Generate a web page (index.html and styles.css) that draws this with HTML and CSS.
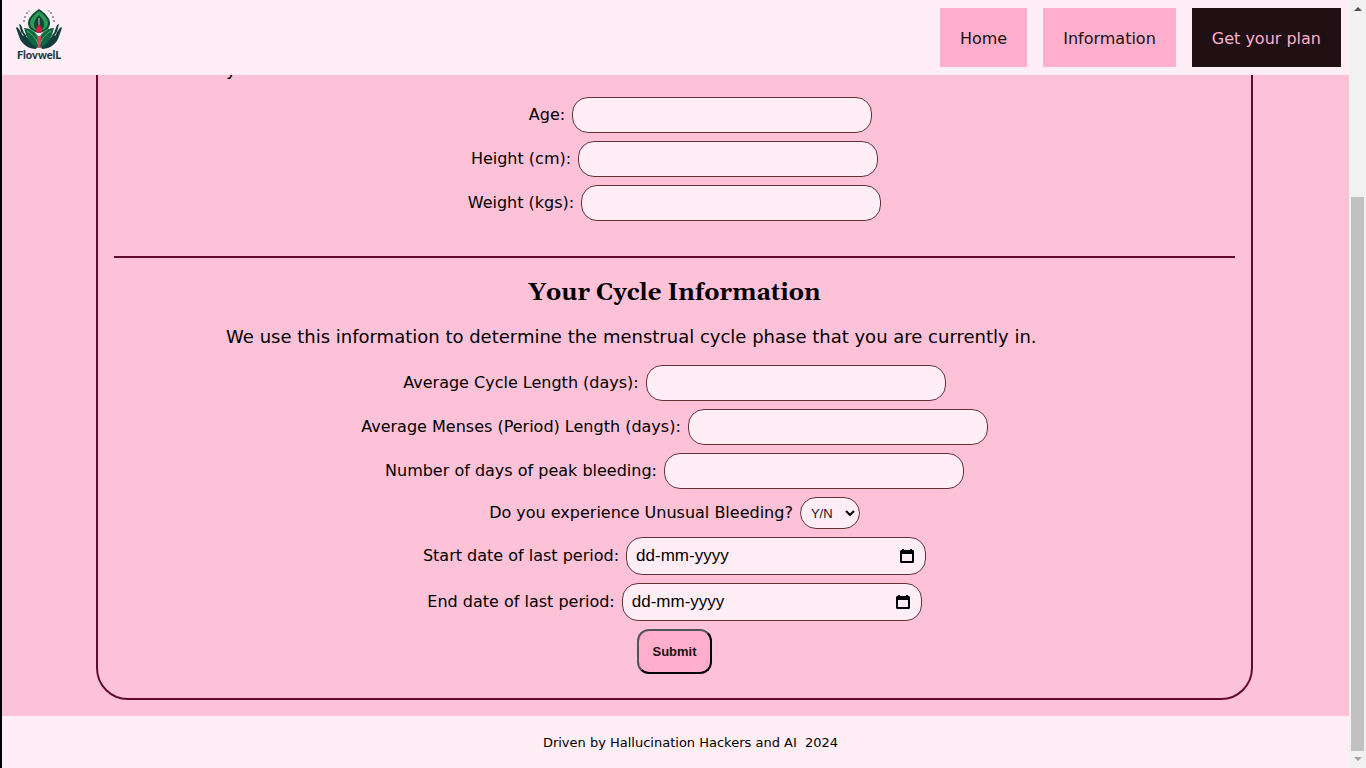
FILE: index.html
```html
<!DOCTYPE html>
<html lang="en">
<head>
<meta charset="utf-8">
<title>FlovwelL - Get your plan</title>
<link rel="stylesheet" href="styles.css">
</head>
<body>
<div class="page">
  <header class="header">
    <a class="logo" href="#" aria-label="FlovwelL home">
      <svg class="logo-mark" viewBox="0 0 46 40" aria-hidden="true">
        <g fill="#143c3c">
          <path d="M0 19l1-1 2 2 4 7 1-1 4 3 5 5 4 4-1 2c-7 0-13-4-16-10z"/>
          <path d="M3 15l2 1 3 8 3 3-2 1-4-5z"/>
          <path d="M46 19l-1-1-2 2-4 7-1-1-4 3-5 5-4 4 1 2c7 0 13-4 16-10z"/>
          <path d="M43 15l-2 1-3 8-3 3 2 1 4-5z"/>
          <circle cx="11" cy="4" r=".8"/><circle cx="9" cy="8" r=".8"/><circle cx="8" cy="12" r=".8"/><circle cx="13" cy="2" r=".6"/>
          <circle cx="35" cy="4" r=".8"/><circle cx="37" cy="8" r=".8"/><circle cx="38" cy="12" r=".8"/><circle cx="33" cy="2" r=".6"/>
        </g>
        <path d="M23 0c6 4 11 9 11 14 0 6-5 9-11 10-6-1-11-4-11-10C12 9 17 4 23 0z" fill="#0d4a35"/>
        <path d="M23 2c5 4 9 8 9 12s-3 7-9 8c-6-1-9-4-9-8s4-8 9-12z" fill="#2b9a56"/>
        <path d="M23 6c3 3 5 6 5 9 0 4-2 6-5 7-3-1-5-3-5-7 0-3 2-6 5-9z" fill="#0d4a35"/>
        <path d="M8 19c7 0 12 4 14 9v11c-7-3-11-8-14-20zM38 19c-7 0-12 4-14 9v11c7-3 11-8 14-20z" fill="#146541"/>
        <path d="M11 22c5 3 9 7 11 13M35 22c-5 3-9 7-11 13M15 21c3 1 5 3 7 7M31 21c-3 1-5 3-7 7" fill="none" stroke="#48b36d"/>
        <path d="M23 9v9" stroke="#efa9b4"/>
        <path d="M23 15c2 3 3 4 3 6a3 3 0 0 1-6 0c0-2 1-3 3-6z" fill="#d51f3c"/>
        <path d="M21 27h4l-1 12h-2z" fill="#d8485a"/>
      </svg>
      <span class="logo-name">FlovwelL</span>
    </a>
    <nav class="nav">
      <a class="nav-link" href="#">Home</a>
      <a class="nav-link" href="#">Information</a>
      <a class="nav-link nav-link-active" href="#">Get your plan</a>
    </nav>
  </header>

  <main class="main">
    <form class="card">
      <section class="section">
        <p class="intro">y</p>
        <div class="row row-age"><label for="age">Age:</label><input class="field" id="age" type="text"></div>
        <div class="row"><label for="height">Height (cm):</label><input class="field" id="height" type="text"></div>
        <div class="row"><label for="weight">Weight (kgs):</label><input class="field" id="weight" type="text"></div>
      </section>
      <hr class="rule">
      <section class="section">
        <h2 class="title">Your Cycle Information</h2>
        <p class="intro">We use this information to determine the menstrual cycle phase that you are currently in.</p>
        <div class="row"><label for="cycle">Average Cycle Length (days):</label><input class="field" id="cycle" type="text"></div>
        <div class="row"><label for="menses">Average Menses (Period) Length (days):</label><input class="field" id="menses" type="text"></div>
        <div class="row"><label for="peak">Number of days of peak bleeding:</label><input class="field" id="peak" type="text"></div>
        <div class="row">
          <label for="unusual">Do you experience Unusual Bleeding?</label>
          <span class="select-wrap">
            <select class="select" id="unusual"><option>Y/N</option><option>Yes</option><option>No</option></select>
            <svg class="chevron" viewBox="0 0 10 6" aria-hidden="true"><path d="M1 1l4 4 4-4" fill="none" stroke="#000" stroke-width="2"/></svg>
          </span>
        </div>
        <div class="row">
          <label for="start">Start date of last period:</label>
          <span class="field date">
            <input class="date-input" id="start" type="text" placeholder="dd-mm-yyyy">
            <button class="date-button" type="button" aria-label="Choose start date"><svg viewBox="0 0 14 14" aria-hidden="true"><path d="M1 1h1V0h2v1h6V0h2v1h1l1 1v11l-1 1H1l-1-1V2zm1 4v7h10V5z" fill-rule="evenodd"/></svg></button>
          </span>
        </div>
        <div class="row">
          <label for="end">End date of last period:</label>
          <span class="field date">
            <input class="date-input" id="end" type="text" placeholder="dd-mm-yyyy">
            <button class="date-button" type="button" aria-label="Choose end date"><svg viewBox="0 0 14 14" aria-hidden="true"><path d="M1 1h1V0h2v1h6V0h2v1h1l1 1v11l-1 1H1l-1-1V2zm1 4v7h10V5z" fill-rule="evenodd"/></svg></button>
          </span>
        </div>
        <div class="row"><button class="submit" type="submit">Submit</button></div>
      </section>
    </form>
  </main>

  <footer class="footer">Driven by Hallucination Hackers and AI&nbsp; 2024</footer>
</div>
<div class="scrollbar" aria-hidden="true">
  <svg class="arrow" viewBox="0 0 8 4"><path d="M0 4l4-4 4 4z" fill="#505050"/></svg>
  <div class="track"><div class="thumb"></div></div>
  <svg class="arrow" viewBox="0 0 8 4"><path d="M0 0l4 4 4-4z" fill="#a3a3a3"/></svg>
</div>
</body>
</html>
```
FILE: styles.css
```css
* { box-sizing: border-box; }

body {
  display: flex;
  height: 100vh;
  margin: 0;
  overflow: hidden;
  border-left: 2px solid #000;
  background: #fdc2d8;
  color: #000;
  font: 16px/20px Verdana, "DejaVu Sans", sans-serif;
}

.page {
  display: flex;
  flex: 1;
  flex-direction: column;
  min-width: 0;
}

.header {
  display: flex;
  flex-shrink: 0;
  align-items: center;
  justify-content: space-between;
  padding: 8px 8px 8px 14px;
  background: #ffeef5;
}

.logo {
  display: flex;
  flex-direction: column;
  align-items: center;
  width: 46px;
  padding-bottom: 6px;
  color: #173a40;
  text-decoration: none;
}

.logo-mark { width: 46px; height: 40px; }

.logo-name { font: 900 11px/11px Lato, sans-serif; }

.nav { display: flex; gap: 16px; }

.nav-link {
  padding: 21px 20px 19px;
  background: #ffafcc;
  color: #201013;
  line-height: 19px;
  text-decoration: none;
}

.nav-link-active { background: #201013; color: #ffafcc; }

.main {
  display: flex;
  flex: 1;
  flex-direction: column;
  justify-content: flex-end;
  min-height: 0;
  overflow: hidden;
}

.card {
  margin: 0 96px 16px 94px;
  padding: 16px 16px 24px;
  border: 2px solid #640a2c;
  border-radius: 32px;
}

.section { display: flex; flex-direction: column; gap: 8px; }

.rule {
  height: 2px;
  margin: 35px 0 17px;
  border: 0;
  background: #640a2c;
}

.title {
  margin: 0;
  font: bold 24px/36px Gelasio, Georgia, "Liberation Serif", serif;
  text-align: center;
}

.intro {
  margin: 7px 10% 9px;
  font-size: 18px;
  line-height: 22px;
}

.row {
  display: flex;
  align-items: center;
  justify-content: center;
  gap: 7px;
}

.row-age { padding-left: 52px; }

.field {
  width: 300px;
  height: 36px;
  padding: 8px;
  border: 1px solid #643339;
  border-radius: 16px;
  background: #ffeef5;
  font: 17px "Liberation Sans", Arial, sans-serif;
}

.date { display: flex; align-items: center; height: 38px; padding: 8px 11px 8px 9px; }

.date-input {
  flex: 1;
  min-width: 0;
  padding: 0;
  border: 0;
  background: none;
  color: #000;
  font: inherit;
}

.date-input::placeholder { color: #000; opacity: 1; }

.date-button { display: flex; padding: 0; border: 0; background: none; }
.date-button svg { width: 14px; height: 14px; }

.select-wrap { position: relative; display: flex; }

.select {
  width: 60px;
  height: 32px;
  padding: 0 10px;
  border: 1px solid #643339;
  border-radius: 16px;
  background: #ffeef5;
  color: #201013;
  font: 13px "Liberation Sans", Arial, sans-serif;
  appearance: none;
}

.chevron {
  position: absolute;
  top: 13px;
  right: 5px;
  width: 10px;
  height: 6px;
  pointer-events: none;
}

.submit {
  padding: 13px;
  border: 2px outset #000;
  border-radius: 12px;
  background: #ffafcc;
  color: #201013;
  font: bold 13px/15px "Liberation Sans", Arial, sans-serif;
}

.footer {
  flex-shrink: 0;
  padding: 18px 0 16px 30px;
  background: #ffeef5;
  font-size: 13px;
  line-height: 18px;
  text-align: center;
}

.scrollbar {
  display: flex;
  flex-direction: column;
  align-items: center;
  gap: 6px;
  width: 17px;
  padding: 7px 2px;
  background: #f1f1f1;
}

.arrow { width: 8px; height: 4px; }

.track {
  display: flex;
  flex: 1;
  align-items: flex-end;
  width: 100%;
}

.thumb { width: 13px; height: 75.5%; background: #c1c1c1; }
```
